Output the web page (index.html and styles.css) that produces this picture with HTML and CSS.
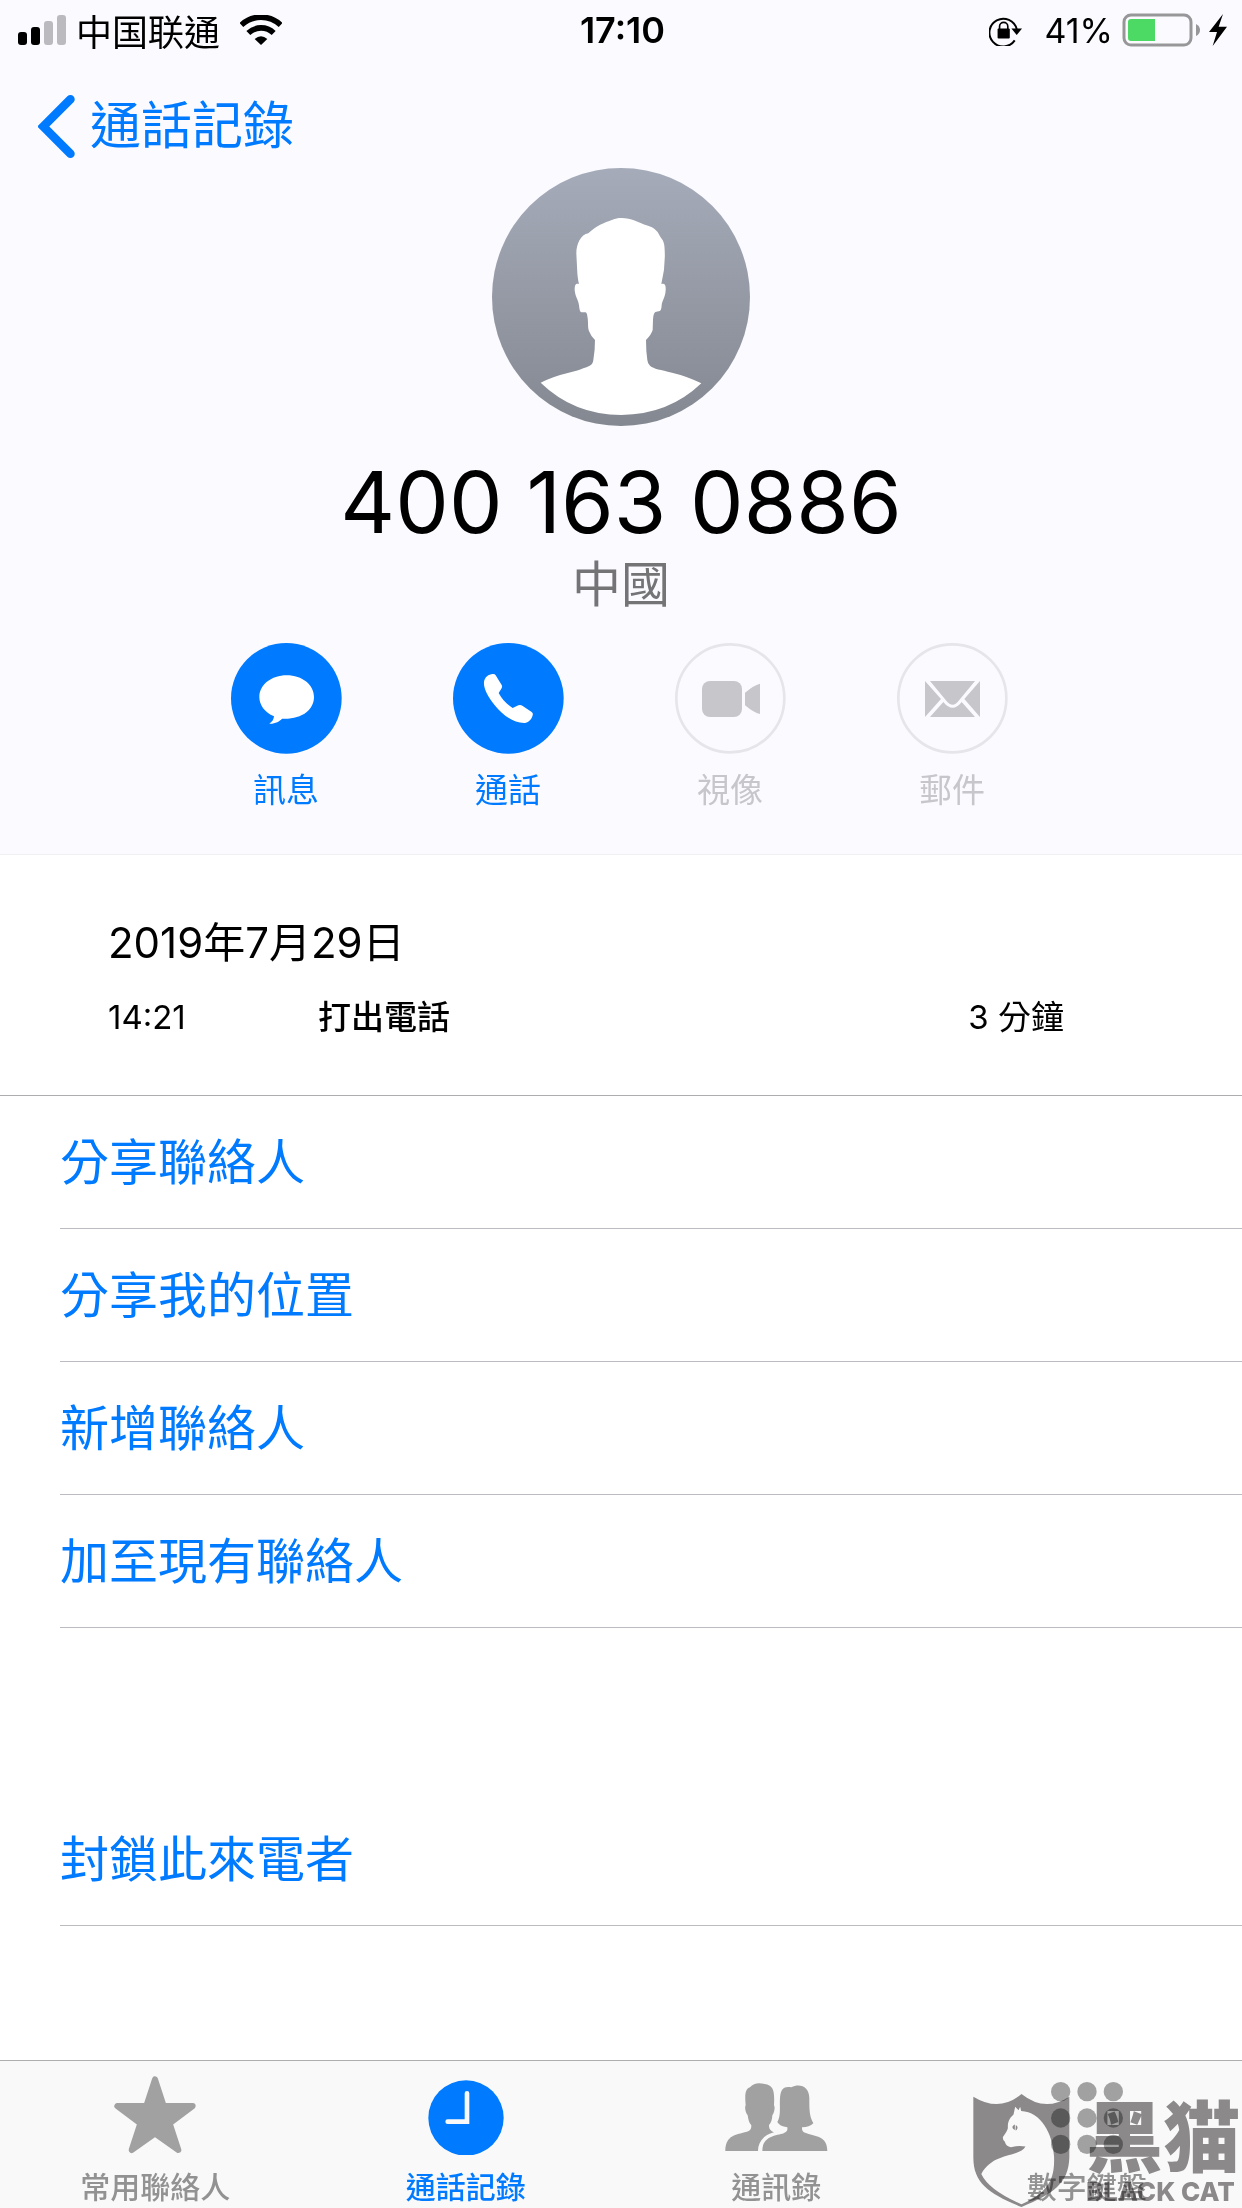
FILE: index.html
```html
<!DOCTYPE html>
<html lang="zh-Hant">
<head>
    <meta charset="UTF-8">
    <meta name="viewport" content="width=device-width, initial-scale=1.0">
    <title>通話記錄</title>
    <link rel="stylesheet" href="styles.css">
</head>
<body>
    <header class="header">
        <div class="status">
            <div class="status-left">
                <svg class="signal" viewBox="0 0 48 30">
                    <rect x="0" y="17" width="9" height="13" rx="3"/>
                    <rect x="13" y="12" width="9" height="18" rx="3"/>
                    <rect class="off" x="26" y="6" width="9" height="24" rx="3"/>
                    <rect class="off" x="39" y="0" width="9" height="30" rx="3"/>
                </svg>
                <span class="carrier">中国联通</span>
                <svg class="wifi" viewBox="0 0 126 90">
                    <path d="M4 30 A86 86 0 0 1 122 30" fill="none" stroke="#000" stroke-width="17"/>
                    <path d="M25 54 A55 55 0 0 1 101 54" fill="none" stroke="#000" stroke-width="17"/>
                    <path d="M44 72 Q63 56 82 72 L63 90 Z"/>
                </svg>
            </div>
            <span class="time">17:10</span>
            <div class="status-right">
                <svg class="lock" viewBox="0 0 100 92">
                    <path d="M78 76 A42 42 0 1 1 84 42" fill="none" stroke="#000" stroke-width="6"/>
                    <path d="M68 40 H100 L84 60 Z"/>
                    <rect x="26" y="40" width="37" height="30" rx="3"/>
                    <path d="M32 45 V34 A12 12 0 0 1 57 34 V45" fill="none" stroke="#000" stroke-width="5"/>
                </svg>
                <span class="percent">41%</span>
                <svg class="battery" viewBox="0 0 78 34">
                    <rect x="2" y="2" width="67" height="30" rx="7" fill="none" stroke="#979799" stroke-width="3"/>
                    <path d="M9 6 H33 V28 H9 Q6 28 6 25 V9 Q6 6 9 6Z" fill="#4cd964"/>
                    <path d="M74 11 Q78 13 78 17 Q78 21 74 23Z" fill="#979799"/>
                </svg>
                <svg class="bolt" viewBox="0 0 54 96">
                    <path d="M42 0 L0 54 H24 L11 96 L54 38 H29 Z"/>
                </svg>
            </div>
        </div>

        <nav class="navbar">
            <a class="back" href="#recents">
                <svg class="chevron" viewBox="0 0 110 190">
                    <path d="M97 13 L15 95 L97 177" fill="none" stroke="#007aff" stroke-width="26" stroke-linecap="round"/>
                </svg>
                通話記錄
            </a>
        </nav>

        <section class="contact">
            <svg class="avatar" viewBox="0 0 774 774">
                <defs>
                    <linearGradient id="avatarFill" x1="0" y1="0" x2="0" y2="1">
                        <stop offset="0" stop-color="#a5abb9"/>
                        <stop offset="1" stop-color="#848891"/>
                    </linearGradient>
                </defs>
                <circle cx="387" cy="387" r="387" fill="url(#avatarFill)"/>
                <path fill="#fff" d="M388 150 C370 150 362 156 354 158 C322 169 308 178 289 196 C266 199 253 229 253 256 L256 316 Q258 338 261 348 C251 346 248 350 248 366 C250 388 259 394 261 412 C263 429 264 433 271 433 L280 433 Q285 434 286 445 C290 464 286 482 292 491 Q297 505 309 516 Q309 548 304 576 Q303 588 293 593 C240 617 205 614 146 644 Q245 740 388 741 Q530 740 628 646 Q587 625 540 614 C505 605 486 603 474 593 Q467 588 466 576 Q462 550 462 516 Q478 500 482 486 L483 455 Q484 436 490 432 L503 429 Q508 428 509 412 C510 397 520 390 521 366 C522 350 518 345 508 348 Q521 296 518 246 C518 215 508 215 502 201 Q494 181 468 173 C435 163 420 150 388 150Z"/>
            </svg>
            <h1 class="number">400 163 0886</h1>
            <p class="region">中國</p>
        </section>

        <div class="actions">
            <button class="action">
                <svg class="circle" viewBox="0 0 333 333">
                    <circle cx="166" cy="166" r="166" fill="#007aff"/>
                    <path fill="#fff" d="M167 97 C214 97 249 126 249 162 C249 201 212 230 153 227 C146 235 132 243 115 242 Q128 234 129 220 C101 208 85 186 85 162 C85 126 121 97 167 97Z"/>
                </svg>
                訊息
            </button>
            <button class="action">
                <svg class="circle" viewBox="0 0 333 333">
                    <circle cx="166" cy="166" r="166" fill="#007aff"/>
                    <path fill="#fff" d="M93 117 C95 102 107 94 119 93 Q125 92 128 97 L146 126 Q149 131 145 137 L137 150 C147 168 160 183 179 195 L196 187 Q202 184 208 188 L236 207 Q241 210 239 217 C236 230 226 239 215 240 C181 241 147 214 124 185 C106 162 91 137 93 117Z"/>
                </svg>
                通話
            </button>
            <button class="action" disabled>
                <svg class="circle" viewBox="0 0 333 333">
                    <circle cx="166" cy="166" r="162" fill="none" stroke="#e5e5ea" stroke-width="8"/>
                    <rect x="81" y="114" width="120" height="108" rx="24" fill="#c7c6cb"/>
                    <path fill="#c7c6cb" d="M210 149 Q236 127 255 122 V213 Q236 209 210 187Z"/>
                </svg>
                視像
            </button>
            <button class="action" disabled>
                <svg class="circle" viewBox="0 0 333 333">
                    <circle cx="166" cy="166" r="162" fill="none" stroke="#e5e5ea" stroke-width="8"/>
                    <path fill="#c7c6cb" d="M99 114 H234 L185 173 Q167 197 148 173Z M84 114 L132 168 L84 222Z M249 114 L202 168 L249 222Z M99 222 L139 177 Q167 212 194 177 L234 222Z"/>
                </svg>
                郵件
            </button>
        </div>
    </header>

    <main class="main">
        <section class="log">
            <h2 class="date">2019年7月29日</h2>
            <table class="calls">
                <tbody>
                    <tr>
                        <td class="call-time">14:21</td>
                        <td class="call-type">打出電話</td>
                        <td class="call-length">3 分鐘</td>
                    </tr>
                </tbody>
            </table>
        </section>

        <div class="list">
            <button class="item">分享聯絡人</button>
            <button class="item">分享我的位置</button>
            <button class="item">新增聯絡人</button>
            <button class="item">加至現有聯絡人</button>
        </div>
        <div class="list block">
            <button class="item">封鎖此來電者</button>
        </div>
    </main>

    <nav class="tabs">
        <a class="tab" href="#favourites">
            <svg class="tab-icon" viewBox="0 0 324 243">
                <path fill="#a1a1a1" stroke="#a1a1a1" stroke-width="18" stroke-linejoin="round" d="M162 16 L188 96 H275 L206 148 L232 228 L162 179 L92 228 L118 148 L49 96 H136Z"/>
            </svg>
            常用聯絡人
        </a>
        <a class="tab active" href="#recents">
            <svg class="tab-icon" viewBox="0 0 324 243">
                <circle cx="162" cy="132" r="113" fill="#007aff"/>
                <path d="M165 58 V143 H107" fill="none" stroke="#f9f9f9" stroke-width="14" stroke-linecap="round"/>
            </svg>
            通話記錄
        </a>
        <a class="tab" href="#contacts">
            <svg class="tab-icon" viewBox="0 0 324 243">
                <path fill="#a1a1a1" d="M10 231 C10 190 35 183 60 177 C85 172 88 168 88 154 C80 145 79 135 77 124 C69 114 68 98 71 94 C68 60 70 45 84 40 C95 26 112 26 128 30 C155 34 158 50 156 94 C160 100 157 115 151 124 C150 140 146 148 141 153 C141 165 145 170 156 175 C125 182 108 205 108 231Z"/>
                <path fill="#a1a1a1" d="M121 231 C121 185 165 185 185 178 C196 173 197 168 196 160 C180 158 170 152 166 144 C178 125 172 95 174 72 C176 40 190 36 208 40 C235 26 262 40 262 72 C262 110 262 125 274 148 C266 156 255 160 240 160 C240 172 242 175 260 180 C290 188 316 192 316 231Z"/>
            </svg>
            通訊錄
        </a>
        <a class="tab" href="#keypad">
            <svg class="tab-icon" viewBox="0 0 324 243" fill="#a1a1a1">
                <circle cx="83" cy="53" r="29"/><circle cx="162" cy="53" r="29"/><circle cx="241" cy="53" r="29"/>
                <circle cx="83" cy="132" r="29"/><circle cx="162" cy="132" r="29"/><circle cx="241" cy="132" r="29"/>
                <circle cx="83" cy="211" r="29"/><circle cx="162" cy="211" r="29"/><circle cx="241" cy="211" r="29"/>
            </svg>
            數字鍵盤
        </a>

        <!-- logo laid over the tab bar -->
        <div class="mark">
            <svg class="shield" viewBox="0 0 292 344">
                <path fill="#8f8c8d" fill-rule="evenodd" d="M1 10 Q80 58 146 2 Q216 58 290 10 V192 C288 272 240 302 146 342 C50 302 1 272 1 192Z M127 40 L122 64 C108 76 104 90 105 104 Q104 112 90 131 Q89 141 96 146 Q99 160 114 162 Q136 156 158 160 C138 194 60 176 25 243 Q48 292 146 334 C235 296 246 250 244 190 C240 120 205 56 145 53 L142 40 L137 51Z"/>
                <path fill="#8f8c8d" d="M123 95 L126 94 V110 Q117 106 119 100Z M129 95 Q138 101 131 110 L128 112Z"/>
            </svg>
            <div class="mark-text">
                <span class="mark-name">黑猫</span>
                <span class="mark-sub">BLACK CAT</span>
            </div>
        </div>
    </nav>
</body>
</html>
```
FILE: styles.css
```css
* {
    margin: 0;
    padding: 0;
    box-sizing: border-box;
}

body {
    min-height: 100vh;
    display: flex;
    flex-direction: column;
    background-color: #fff;
    color: #000;
    font-family: Inter, "Noto Sans CJK TC", sans-serif;
}

button {
    background: none;
    border: none;
    font-family: inherit;
    text-align: left;
    cursor: pointer;
}

a {
    text-decoration: none;
}

svg {
    display: block;
    flex-shrink: 0;
}

/* header */
.header {
    padding-bottom: 40px;
    background-color: #fafaff;
    border-bottom: 1px solid #f0f0f4;
}

.status {
    display: grid;
    grid-template-columns: 1fr auto 1fr;
    align-items: center;
    height: 60px;
    padding: 0 15px 0 18px;
}

.status-left,
.status-right {
    display: flex;
    align-items: center;
}

.status-right {
    justify-content: flex-end;
}

.signal {
    width: 48px;
    height: 30px;
}

.off {
    fill: #bbbabf;
}

.carrier {
    margin: 0 20px 0 10px;
    font-family: "Noto Sans CJK SC", sans-serif;
    font-size: 36px;
    line-height: 60px;
}

.wifi {
    width: 42px;
    height: 30px;
}

.time {
    font-size: 36px;
    font-weight: 600;
}

.lock {
    width: 33px;
    height: 31px;
    margin-right: 22px;
}

.percent {
    margin-right: 9px;
    font-size: 34px;
}

.battery {
    width: 78px;
    height: 34px;
    margin-right: 9px;
}

.bolt {
    width: 18px;
    height: 32px;
}

.navbar {
    height: 108px;
    padding: 30px 38px 0;
}

.back {
    display: inline-flex;
    align-items: center;
    gap: 15px;
    color: #007aff;
    font-size: 51px;
    line-height: 72px;
}

.chevron {
    width: 37px;
    height: 63px;
}

.contact {
    display: flex;
    flex-direction: column;
    align-items: center;
}

.avatar {
    width: 258px;
    height: 258px;
}

.number {
    margin-top: 27px;
    font-size: 85px;
    font-weight: 400;
    line-height: 100px;
}

.region {
    color: #747477;
    font-size: 49px;
    line-height: 64px;
}

.actions {
    display: flex;
    justify-content: center;
    gap: 111px;
    padding: 26px 4px 0 0;
}

.action {
    display: flex;
    flex-direction: column;
    align-items: center;
    gap: 12px;
    width: 111px;
    color: #007aff;
    font-size: 33px;
    line-height: 48px;
}

.action:disabled {
    color: #c7c6cb;
    cursor: default;
}

.circle {
    width: 111px;
    height: 111px;
}

/* call log */
.main {
    flex: 1;
}

.log {
    padding: 58px 178px 54px 108px;
    border-bottom: 1px solid #adadb0;
}

.date {
    font-size: 42px;
    font-weight: 400;
    line-height: 60px;
}

.calls {
    width: 100%;
    margin-top: 20px;
    border-collapse: collapse;
    font-size: 33px;
    line-height: 48px;
}

.call-time {
    width: 210px;
}

.call-type {
    font-weight: 500;
}

.call-length {
    text-align: right;
}

/* contact options */
.list {
    padding-left: 60px;
}

.block {
    padding-top: 165px;
}

.item {
    display: block;
    width: 100%;
    height: 133px;
    padding-bottom: 8px;
    border-bottom: 1px solid #bcbbc1;
    color: #007aff;
    font-size: 49px;
}

/* bottom bar */
.tabs {
    position: relative;
    display: grid;
    grid-template-columns: repeat(4, 1fr);
    height: 148px;
    padding-top: 13px;
    background-color: #f9f9f9;
    border-top: 1px solid #adadb0;
}

.tab {
    display: flex;
    flex-direction: column;
    align-items: center;
    gap: 12px;
    color: #929292;
    font-size: 30px;
    font-weight: 500;
    line-height: 40px;
}

.active {
    color: #007aff;
}

.tab-icon {
    width: 108px;
    height: 81px;
}

.mark {
    position: absolute;
    right: 0;
    bottom: 0;
    display: flex;
    align-items: flex-end;
    gap: 16px;
    color: #8f8c8d;
    mix-blend-mode: multiply;
    pointer-events: none;
}

.shield {
    width: 97px;
    height: 115px;
}

.mark-text {
    display: flex;
    flex-direction: column;
    width: 156px;
    padding-bottom: 4px;
}

.mark-name {
    font-family: "Noto Sans CJK SC", sans-serif;
    font-size: 77px;
    font-weight: 900;
    line-height: 94px;
}

.mark-sub {
    font-size: 26px;
    font-weight: 800;
    line-height: 24px;
    white-space: nowrap;
}
```
